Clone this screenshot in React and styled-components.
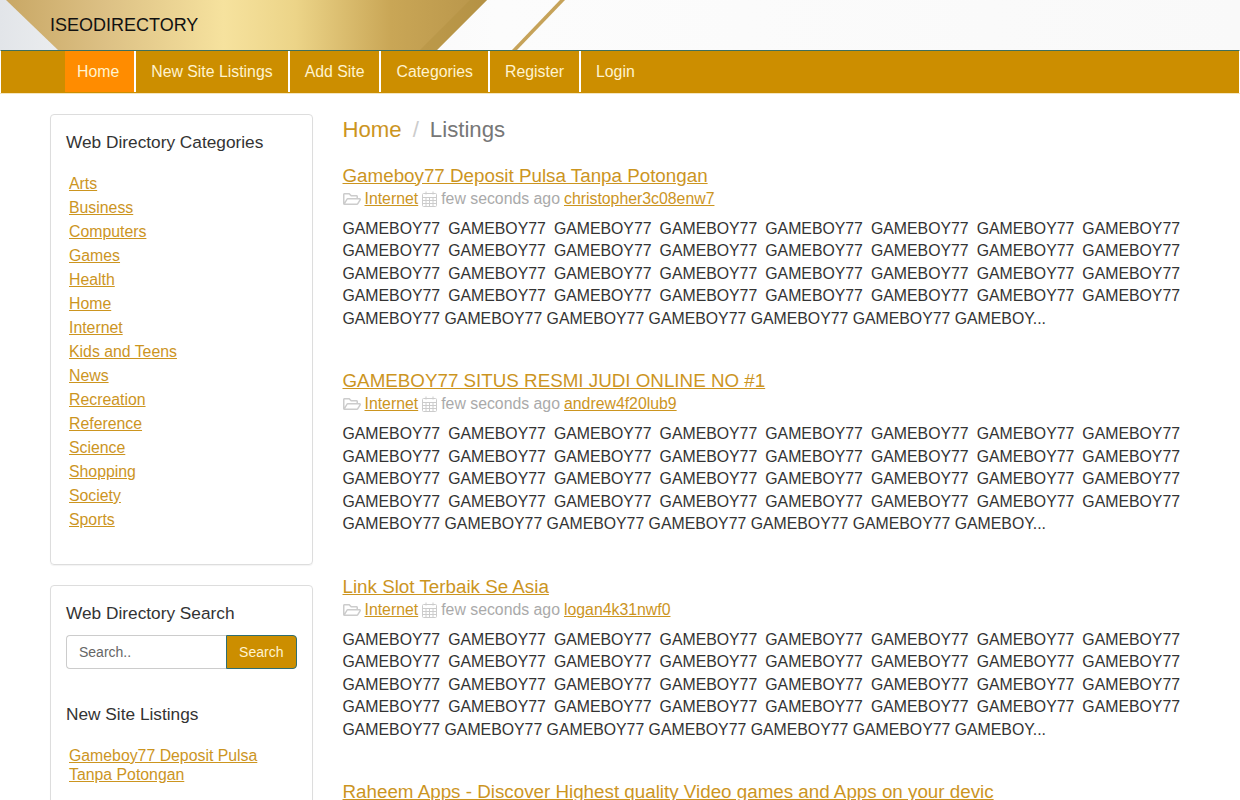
import React from "react";
import styled, { createGlobalStyle } from "styled-components";
import { FaRegFolderOpen } from "react-icons/fa";

const Global = createGlobalStyle`
  html, body { margin: 0; padding: 0; height: 800px; overflow: hidden; background: #fff; }
  body { font-family: "Liberation Sans", Arial, sans-serif; font-size: 15.84px; line-height: 1.4; color: #333; }
  * { box-sizing: border-box; }
`;

const Banner = styled.header`
  position: relative;
  height: 50px;
  overflow: hidden;
  background: linear-gradient(90deg, #e2e5e9 0%, #f1f2f3 8%, #fcfcfc 40%, #f9f9f9 100%);
  display: flex;
  align-items: center;
  padding: 1px 0 0 50px;
`;
const BannerArt = styled.svg`
  position: absolute;
  inset: 0;
  width: 100%;
  height: 100%;
`;
const Brand = styled.a`
  position: relative;
  font-size: 18px;
  color: #111;
  text-decoration: none;
`;

const Nav = styled.nav`
  height: 43px;
  border-top: 1px solid #3f6f5c;
  border-left: 1px solid #fff;
  border-right: 1px solid #fff;
  background: #cc8e00;
  display: flex;
  padding: 0 0 1px 64px;
  box-shadow: 0 1px 0 #f5e6c0;
`;
const NavItem = styled.a`
  display: flex;
  align-items: center;
  padding: 1px 15px 0 ${(p) => (p.$first ? "12px" : "15px")};
  border-right: ${(p) => (p.$last ? "0" : "2px solid #fff")};
  background: ${(p) => (p.$active ? "#ff8c00" : "transparent")};
  color: #fff3cf;
  text-decoration: none;
`;

const Page = styled.div`
  display: flex;
  gap: 30px;
  padding: 21px 60px 0 50px;
`;
const Sidebar = styled.aside`
  width: 262.5px;
  flex: none;
  display: flex;
  flex-direction: column;
  gap: 20px;
`;
const Panel = styled.section`
  border: 1px solid #ddd;
  border-radius: 4px;
  padding: 15px 15px 0;
  box-shadow: 0 1px 1px rgba(0, 0, 0, 0.05);
`;
const PanelTitle = styled.h3`
  margin: ${(p) => p.$top || 0}px 0 0;
  font-size: 17.28px;
  font-weight: 400;
  line-height: 24px;
  color: #333;
`;
const LinkList = styled.ul`
  list-style: none;
  margin: ${(p) => (p.$tight ? "20px" : "18px")} 0 32px;
  padding: 0 0 0 3px;
`;
const LinkItem = styled.li`
  line-height: ${(p) => (p.$tight ? "19px" : "24px")};
  margin-bottom: ${(p) => (p.$tight ? "10px" : "0")};
`;
const Link = styled.a`
  color: #cc951f;
  text-decoration: underline;
`;
const SearchForm = styled.form`
  display: flex;
  margin-top: 10px;
  height: 34px;
`;
const SearchInput = styled.input`
  width: 160px;
  height: 34px;
  padding: 6px 12px;
  border: 1px solid #ccc;
  border-right: 0;
  border-radius: 4px 0 0 4px;
  font: 14px "Liberation Sans", Arial, sans-serif;
  color: #555;
  &::placeholder { color: #666; opacity: 1; }
`;
const SearchButton = styled.button`
  width: 71px;
  height: 34px;
  padding: 0;
  border: 1px solid #2e6d73;
  border-radius: 0 4px 4px 0;
  background: #cc8e00;
  color: #fff3cf;
  font: 14px "Liberation Sans", Arial, sans-serif;
`;

const Main = styled.main`
  width: 837.5px;
  flex: none;
`;
const Crumbs = styled.div`
  display: flex;
  font-size: 22.2px;
  line-height: 30px;
  margin: 0 0 18.5px;
  padding-top: 1px;
  color: #777;
`;
const CrumbLink = styled.a`
  color: #cc951f;
  text-decoration: none;
`;
const CrumbSep = styled.span`
  color: #ccc;
  padding: 0 11px;
`;
const Article = styled.article`
  height: 205.5px;
`;
const ArticleTitle = styled.h2`
  margin: 0;
  font-size: 18.8px;
  font-weight: 400;
  line-height: 24px;
  white-space: nowrap;
`;
const Meta = styled.div`
  display: flex;
  align-items: center;
  gap: 4px;
  height: 22.4px;
  color: #aaa;
`;
const MetaIcon = styled.span`
  display: inline-flex;
  color: #ccc;
  font-size: 18px;
`;
const Body = styled.p`
  margin: 8px 0 0;
  text-align: justify;
  line-height: 22.5px;
  color: #333;
`;

const Calendar = () => (
  <svg width="15" height="16" viewBox="0 0 15 16" fill="none" stroke="#ccc" strokeWidth="1">
    <rect x="0.5" y="2.5" width="14" height="13" rx="1" />
    <path d="M0.5 6.5h14M0.5 9.5h14M0.5 12.5h14M4 6.5v9M7.5 6.5v9M11 6.5v9M4 0.5v3M11 0.5v3" />
  </svg>
);

const categories = ["Arts", "Business", "Computers", "Games", "Health", "Home", "Internet", "Kids and Teens", "News", "Recreation", "Reference", "Science", "Shopping", "Society", "Sports"];
const navItems = ["Home", "New Site Listings", "Add Site", "Categories", "Register", "Login"];
const text = Array(38).fill("GAMEBOY77").join(" ") + " GAMEBOY...";
const articles = [
  ["Gameboy77 Deposit Pulsa Tanpa Potongan", "christopher3c08enw7"],
  ["GAMEBOY77 SITUS RESMI JUDI ONLINE NO #1", "andrew4f20lub9"],
  ["Link Slot Terbaik Se Asia", "logan4k31nwf0"],
  ["Raheem Apps - Discover Highest quality Video games and Apps on your devic", "raheem"],
];

export default function App() {
  return (
    <>
      <Global />
      <Banner>
        <BannerArt viewBox="0 0 1240 50" preserveAspectRatio="none" aria-hidden="true">
          <defs>
            <linearGradient id="gold" gradientUnits="userSpaceOnUse" x1="8" y1="0" x2="487" y2="0">
              <stop offset="0" stopColor="#c9a866" />
              <stop offset="0.2" stopColor="#dcc084" />
              <stop offset="0.45" stopColor="#f6e29e" />
              <stop offset="0.6" stopColor="#ecd488" />
              <stop offset="0.8" stopColor="#c9a656" />
              <stop offset="1" stopColor="#b8954a" />
            </linearGradient>
          </defs>
          <polygon points="6,0 487,0 437,50 58,50" fill="url(#gold)" />
          <polygon points="487,0 470,0 420,50 437,50" fill="#b08c3c" opacity="0.35" />
          <polygon points="560,0 565,0 517,50 512,50" fill="#c6a35a" />
        </BannerArt>
        <Brand>ISEODIRECTORY</Brand>
      </Banner>
      <Nav>
        {navItems.map((n, i) => (
          <NavItem key={n} $first={i === 0} $active={i === 0} $last={i === navItems.length - 1}>{n}</NavItem>
        ))}
      </Nav>
      <Page>
        <Sidebar>
          <Panel>
            <PanelTitle>Web Directory Categories</PanelTitle>
            <LinkList>
              {categories.map((c) => (
                <LinkItem key={c}><Link>{c}</Link></LinkItem>
              ))}
            </LinkList>
          </Panel>
          <Panel>
            <PanelTitle>Web Directory Search</PanelTitle>
            <SearchForm>
              <SearchInput placeholder="Search.." />
              <SearchButton type="button">Search</SearchButton>
            </SearchForm>
            <PanelTitle $top={33}>New Site Listings</PanelTitle>
            <LinkList $tight>
              <LinkItem $tight><Link>Gameboy77 Deposit Pulsa<br />Tanpa Potongan</Link></LinkItem>
            </LinkList>
          </Panel>
        </Sidebar>
        <Main>
          <Crumbs>
            <CrumbLink>Home</CrumbLink>
            <CrumbSep>/</CrumbSep>
            <span>Listings</span>
          </Crumbs>
          {articles.map(([title, user]) => (
            <Article key={title}>
              <ArticleTitle><Link>{title}</Link></ArticleTitle>
              <Meta>
                <MetaIcon><FaRegFolderOpen /></MetaIcon>
                <Link>Internet</Link>
                <MetaIcon><Calendar /></MetaIcon>
                few seconds ago
                <Link>{user}</Link>
              </Meta>
              <Body>{text}</Body>
            </Article>
          ))}
        </Main>
      </Page>
    </>
  );
}
